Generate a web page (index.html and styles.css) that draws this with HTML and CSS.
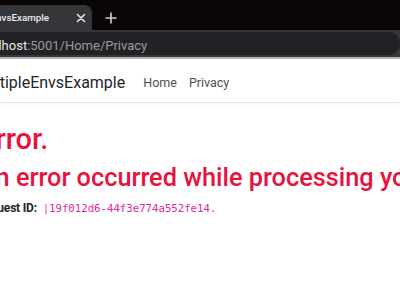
FILE: index.html
```html
<!DOCTYPE html>
<html lang="en">
<head>
    <meta charset="UTF-8">
    <meta name="viewport" content="width=device-width, initial-scale=1.0">
    <title>Error - MultipleEnvsExample</title>
    <link rel="stylesheet" href="styles.css">
</head>
<body>

<!-- Browser chrome: tab strip -->
<div class="tab-strip">
    <div class="tab">
        <span class="tab-title">Privacy Policy - MultipleEnvsExample</span>
        <svg class="tab-close" width="10" height="10" viewBox="0 0 10 10">
            <path d="M1.5 1.5 L8.5 8.5 M8.5 1.5 L1.5 8.5" stroke="#e6e6e6" stroke-width="1.6" stroke-linecap="round"/>
        </svg>
    </div>
    <svg class="tab-new" width="12" height="12" viewBox="0 0 12 12">
        <path d="M6 0.5 V11.5 M0.5 6 H11.5" stroke="#d0d0d0" stroke-width="1.6"/>
    </svg>
</div>

<!-- Browser chrome: address bar -->
<div class="toolbar">
    <div class="omnibox">
        <span class="host">localhost</span><span class="path">:5001/Home/Privacy</span>
    </div>
</div>

<!-- Site header -->
<header class="navbar">
    <div class="shift">
        <span class="brand">MultipleEnvsExample</span>
        <nav class="nav-links">
            <a href="#">Home</a>
            <a href="#">Privacy</a>
        </nav>
    </div>
</header>

<!-- Error page body -->
<main class="shift content">
    <h1 class="text-danger">Error.</h1>
    <h2 class="text-danger">An error occurred while processing your request.</h2>
    <p class="request-id">
        <strong>Request ID:</strong> <code>|19f012d6-44f3e774a552fe14.</code>
    </p>
</main>

</body>
</html>
```

FILE: styles.css
```css
body {
    margin: 0;
    font-family: Roboto, "Liberation Sans", Arial, sans-serif;
    background-color: #fff;
    overflow: hidden;
    width: 400px;
    height: 284px;
}
.tab-strip {
    height: 30px;
    background-color: #0a0606;
    display: flex;
    align-items: flex-end;
}
.tab {
    height: 25px;
    width: 248px;
    flex-shrink: 0;
    margin-left: -156px;
    background-color: #35363a;
    border-radius: 8px 8px 0 0;
    display: flex;
    align-items: center;
    justify-content: space-between;
    padding: 0 6px 0 10px;
    box-sizing: border-box;
    color: #ececec;
    font-size: 9.8px;
    font-weight: 500;
}
.tab-title {
    flex: 1;
    min-width: 0;
    white-space: nowrap;
    overflow: hidden;
    text-align: right;
    padding-right: 27px;
}
.tab-close {
    flex-shrink: 0;
}
.tab-new {
    align-self: center;
    margin-left: 13px;
    margin-top: 6px;
}
.toolbar {
    height: 29px;
    background-color: #35363a;
    padding-top: 2px;
    box-sizing: border-box;
    border-bottom: 2px solid #b4b4b4;
}
.omnibox {
    height: 23px;
    margin-left: -40px;
    background-color: #212226;
    border-radius: 12px;
    display: flex;
    align-items: center;
    padding-left: 14px;
    padding-top: 3px;
    box-sizing: border-box;
    font-size: 13px;
    white-space: nowrap;
}
.host {
    color: #e6e6e6;
}
.path {
    color: #9a9a9a;
}
.shift {
    margin-left: -27px;
}
.navbar {
    height: 43px;
    border-bottom: 1px solid #e6e6e6;
    box-shadow: 0 1px 3px rgba(0, 0, 0, 0.05);
}
.navbar .shift {
    display: flex;
    align-items: center;
    height: 100%;
    padding-top: 3px;
    box-sizing: border-box;
    white-space: nowrap;
}
.brand {
    font-size: 16px;
    color: #212529;
    margin-right: 18px;
}
.nav-links {
    display: flex;
    gap: 12px;
}
.nav-links a {
    color: #4d4f52;
    text-decoration: none;
    font-size: 12.5px;
}
.content {
    white-space: nowrap;
}
.text-danger {
    color: #e8123f;
    font-weight: 500;
    margin: 0;
    line-height: 1.2;
}
h1.text-danger {
    font-size: 29px;
    margin-top: 19px;
    margin-left: 6px;
}
h2.text-danger {
    font-size: 25.3px;
    margin-top: 6px;
    margin-left: 6px;
}
.request-id {
    margin: 8px 0 0 4px;
    font-size: 12px;
    letter-spacing: -0.2px;
    color: #212529;
}
.request-id code {
    font-family: "DejaVu Sans Mono", monospace;
    font-size: 10.7px;
    letter-spacing: 0;
    color: #e0279a;
    margin-left: 3px;
}
```
